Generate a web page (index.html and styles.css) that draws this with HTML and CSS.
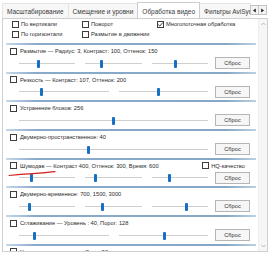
FILE: index.html
```html
<!DOCTYPE html>
<html lang="ru">
<head>
<meta charset="utf-8">
<link rel="stylesheet" href="styles.css">
</head>
<body>
<div class="window">
  <div class="tabstrip">
    <div class="tablist">
      <div class="tab">Масштабирование</div>
      <div class="tab">Смещение и уровни</div>
      <div class="tab active">Обработка видео</div>
      <div class="tab">Фильтры AviSyn</div>
    </div>
    <div class="tab-arrows">
      <span class="arr"><svg width="5" height="5" viewBox="0 0 5 5"><path d="M3.8 0.5 L1 2.5 L3.8 4.5Z" fill="#222"/></svg></span>
      <span class="arr"><svg width="5" height="5" viewBox="0 0 5 5"><path d="M1.2 0.5 L4 2.5 L1.2 4.5Z" fill="#222"/></svg></span>
    </div>
  </div>
  <div class="panel">
    <div class="content">
      <div class="options">
        <label class="opt"><span class="cb"></span>По вертикали</label>
        <label class="opt"><span class="cb"></span>Поворот</label>
        <label class="opt"><span class="cb checked"><svg width="7" height="7" viewBox="0 0 7 7"><path d="M1.2 3.6 L2.8 5.1 L5.8 1.6" fill="none" stroke="#222" stroke-width="0.9"/></svg></span>Многопоточная обработка</label>
        <label class="opt"><span class="cb"></span>По горизонтали</label>
        <label class="opt"><span class="cb"></span>Размытие в движении</label>
      </div>

      <div class="group">
        <div class="title"><span class="cb"></span>Размытие — Радиус: 3, Контраст: 100, Оттенок: 150</div>
        <div class="controls">
          <div class="sliders">
            <div class="slider"><span class="thumb" style="left:34%"></span></div>
            <div class="slider"><span class="thumb" style="left:28%"></span></div>
            <div class="slider"><span class="thumb" style="left:43%"></span></div>
          </div>
          <button class="btn">Сброс</button>
        </div>
      </div>

      <div class="group">
        <div class="title"><span class="cb"></span>Резкость — Контраст: 107, Оттенок: 200</div>
        <div class="controls">
          <div class="sliders">
            <div class="slider"><span class="thumb" style="left:25%"></span></div>
            <div class="slider"><span class="thumb" style="left:45%"></span></div>
          </div>
          <button class="btn">Сброс</button>
        </div>
      </div>

      <div class="group">
        <div class="title"><span class="cb"></span>Устранение блоков: 256</div>
        <div class="controls">
          <div class="sliders">
            <div class="slider"><span class="thumb" style="left:50%"></span></div>
          </div>
          <button class="btn">Сброс</button>
        </div>
      </div>

      <div class="group">
        <div class="title"><span class="cb"></span>Двумерно-пространственное: 40</div>
        <div class="controls">
          <div class="sliders">
            <div class="slider"><span class="thumb" style="left:37%"></span></div>
          </div>
          <button class="btn">Сброс</button>
        </div>
      </div>

      <div class="group">
        <div class="title"><span class="cb"></span>Шумодав — Контраст 400, Оттенок: 300, Время: 600
          <span class="hq"><span class="cb"></span>HQ-качество</span>
        </div>
        <div class="controls">
          <div class="sliders">
            <div class="slider"><span class="thumb" style="left:23%"></span></div>
            <div class="slider"><span class="thumb" style="left:18%"></span></div>
            <div class="slider"><span class="thumb" style="left:32%"></span></div>
          </div>
          <button class="btn">Сброс</button>
        </div>
        <svg class="scribble" width="52" height="8" viewBox="0 0 52 8"><path d="M2 6.5 C 10 5.6, 18 5, 26 4.6 S 41 3.2, 48 2.6" fill="none" stroke="#d41c1c" stroke-width="1.1" stroke-linecap="round"/></svg>
      </div>

      <div class="group">
        <div class="title"><span class="cb"></span>Двумерно-временное: 700, 1500, 3000</div>
        <div class="controls">
          <div class="sliders">
            <div class="slider"><span class="thumb" style="left:18%"></span></div>
            <div class="slider"><span class="thumb" style="left:31%"></span></div>
            <div class="slider"><span class="thumb" style="left:62%"></span></div>
          </div>
          <button class="btn">Сброс</button>
        </div>
      </div>

      <div class="group">
        <div class="title"><span class="cb"></span>Сглаживание — Уровень : 40, Порог: 128</div>
        <div class="controls">
          <div class="sliders">
            <div class="slider"><span class="thumb" style="left:17%"></span></div>
            <div class="slider"><span class="thumb" style="left:51%"></span></div>
          </div>
          <button class="btn">Сброс</button>
        </div>
      </div>

      <div class="group">
        <div class="title"><span class="cb"></span>Увеличение резкости — Сила: 50</div>
      </div>
    </div>
    <div class="vscroll">
      <svg width="5" height="4" viewBox="0 0 5 4"><path d="M0.5 3 L2.5 1 L4.5 3" fill="none" stroke="#aaa" stroke-width="0.8"/></svg>
      <svg width="5" height="4" viewBox="0 0 5 4"><path d="M0.5 1 L2.5 3 L4.5 1" fill="none" stroke="#aaa" stroke-width="0.8"/></svg>
    </div>
  </div>
</div>
</body>
</html>
```

FILE: styles.css
```css
* { box-sizing: border-box; }
html, body { margin: 0; padding: 0; }
body {
  width: 270px;
  height: 256px;
  overflow: hidden;
  background: #fff;
  font-family: "Liberation Sans", Arial, sans-serif;
  font-size: 5.7px;
  color: #2a2a2a;
}
.window {
  width: 270px;
  height: 256px;
  display: flex;
  flex-direction: column;
  padding: 0 2px 4px 2px;
}
.tabstrip {
  height: 18px;
  display: flex;
  align-items: flex-end;
  flex: none;
}
.tablist {
  flex: 1;
  min-width: 0;
  display: flex;
  align-items: flex-end;
  overflow: hidden;
  height: 18px;
}
.tab {
  flex: none;
  height: 15px;
  padding: 0 4px;
  display: flex;
  align-items: center;
  font-size: 6.5px;
  color: #3a3a3a;
  white-space: nowrap;
  border: 1px solid #e4e4e4;
  border-bottom: none;
  background: #f7f7f7;
  margin-right: -1px;
}
.tab.active {
  background: #fff;
  border-color: #cdcdcd;
  position: relative;
  z-index: 1;
  margin-bottom: -1px;
  height: 17px;
}
.tab-arrows {
  flex: none;
  display: flex;
  align-self: flex-start;
  margin-top: 5px;
  margin-right: 1px;
}
.arr {
  width: 9px;
  height: 10px;
  border: 1px solid #c4c4c4;
  background: #f3f3f3;
  display: flex;
  align-items: center;
  justify-content: center;
  margin-left: -1px;
}
.panel {
  flex: 1;
  min-height: 0;
  display: flex;
  border: 1px solid #cfcfcf;
  background: #fff;
}
.content {
  flex: 1;
  min-width: 0;
  overflow: hidden;
  padding: 0 2px 0 2px;
}
.options {
  display: grid;
  grid-template-columns: 70px 75px 1fr;
  grid-auto-rows: 10px;
  padding: 0 0 4px 7px;
  height: 24px;
}
.opt {
  display: flex;
  align-items: center;
  gap: 2px;
  white-space: nowrap;
}
.cb {
  flex: none;
  width: 7px;
  height: 7px;
  border: 1px solid #3d3d3d;
  background: #fff;
  display: inline-flex;
  align-items: center;
  justify-content: center;
}
.cb svg { display: block; margin: -1px; }
.group {
  position: relative;
  height: 28.7px;
  padding: 2px 6px 0 5px;
}
.group::before {
  content: "";
  position: absolute;
  left: 1px;
  right: 0;
  top: 0;
  height: 2px;
  background: linear-gradient(90deg, #c7d8e8 0%, #88aacb 12%, #86a8c8 88%, #bcd0e2 100%);
}
.title {
  height: 12px;
  display: flex;
  align-items: center;
  gap: 3px;
  white-space: nowrap;
}
.hq {
  margin-left: auto;
  margin-right: 5px;
  display: flex;
  align-items: center;
  gap: 2px;
}
.controls {
  height: 12px;
  display: flex;
  align-items: center;
}
.sliders {
  flex: 1;
  display: flex;
  gap: 10px;
  padding-left: 9px;
  margin-right: 7px;
}
.slider {
  flex: 1;
  position: relative;
  height: 11px;
}
.slider::before {
  content: "";
  position: absolute;
  left: 0;
  right: 0;
  top: 5px;
  height: 1px;
  background: #cfcfcf;
}
.thumb {
  position: absolute;
  top: 2px;
  width: 3px;
  height: 8px;
  margin-left: -1.5px;
  background: #1670c4;
  border-radius: 1px;
}
.btn {
  flex: none;
  width: 35px;
  height: 12px;
  padding: 0;
  border: 1px solid #b5b5b5;
  background: #f6f6f6;
  font-family: inherit;
  font-size: 5.7px;
  color: #333;
  line-height: 10px;
}
.scribble {
  position: absolute;
  left: 2px;
  top: 11px;
}
.vscroll {
  flex: none;
  width: 9px;
  background: #f6f6f6;
  border-left: 1px solid #eeeeee;
  display: flex;
  flex-direction: column;
  justify-content: space-between;
  align-items: center;
  padding: 3px 0;
}
.vscroll svg { display: block; }
```
